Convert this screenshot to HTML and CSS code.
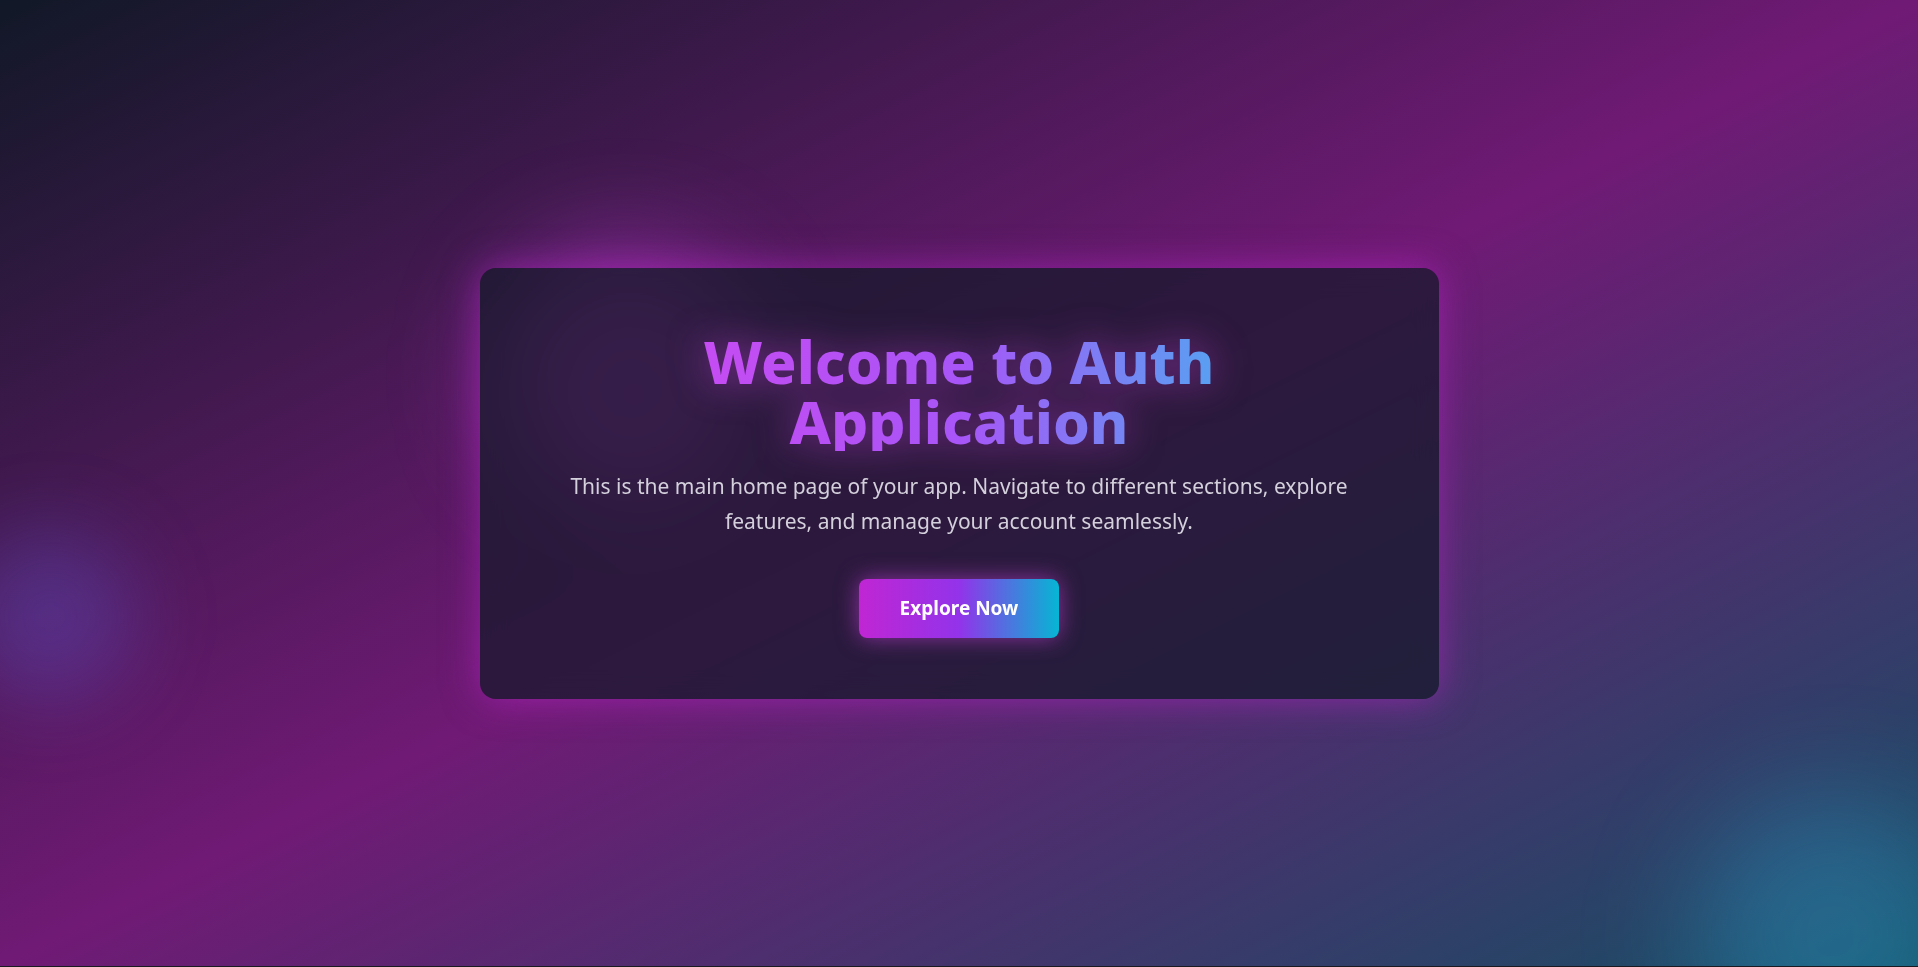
FILE: index.html
```html
<!DOCTYPE html>
<html lang="en">
<head>
<meta charset="utf-8">
<title>Auth Application</title>
<link rel="stylesheet" href="styles.css">
</head>
<body>
<main class="page">
  <div class="blob blob-top"></div>
  <div class="blob blob-left"></div>
  <div class="blob blob-br"></div>
  <section class="card">
    <h1 class="title">Welcome to Auth Application</h1>
    <p class="lead">This is the main home page of your app. Navigate to different sections, explore features, and manage your account seamlessly.</p>
    <button class="cta" type="button">Explore Now</button>
  </section>
</main>
</body>
</html>
```
FILE: styles.css
```css
* { box-sizing: border-box; }
html, body { margin: 0; padding: 0; }
html { background: #1a1a22; }
body {
  font-family: "Noto Sans", "Open Sans", sans-serif;
  background: #1a1a22;
}
.page {
  position: relative;
  height: calc(100vh - 1px);
  overflow: hidden;
  display: flex;
  align-items: center;
  justify-content: center;
  background: linear-gradient(to bottom right, #111827 0%, #701a75 50%, #164e63 100%);
}
.blob {
  position: absolute;
  border-radius: 50%;
  pointer-events: none;
}
.blob-top {
  left: 494px;
  top: 245px;
  width: 260px;
  height: 260px;
  background: rgba(217, 70, 239, 0.42);
  filter: blur(50px);
}
.blob-left {
  left: -35px;
  top: 532px;
  width: 170px;
  height: 170px;
  background: rgba(99, 102, 241, 0.28);
  filter: blur(40px);
}
.blob-br {
  left: 1693px;
  top: 795px;
  width: 280px;
  height: 280px;
  background: rgba(56, 189, 248, 0.26);
  filter: blur(55px);
}
.card {
  position: relative;
  width: 50%;
  padding: 63px 48px 61px;
  border-radius: 16px;
  background: rgba(17, 24, 39, 0.7);
  backdrop-filter: blur(12px);
  box-shadow: 0 0 36px rgba(192, 38, 211, 0.55);
  display: flex;
  flex-direction: column;
  align-items: center;
  text-align: center;
}
.title {
  align-self: stretch;
  margin: 0;
  padding: 0 40px;
  font-size: 58.6px;
  line-height: 60px;
  font-weight: 800;
  background: linear-gradient(to right, #d946ef, #a855f7, #22d3ee);
  -webkit-background-clip: text;
  background-clip: text;
  -webkit-text-fill-color: transparent;
  color: transparent;
  filter: drop-shadow(0 0 18px rgba(217, 70, 239, 0.5));
}
.lead {
  margin: 18px 0 0;
  max-width: 810px;
  font-size: 21px;
  line-height: 35.5px;
  color: #d4d0dc;
}
.cta {
  margin-top: 39px;
  width: 200px;
  height: 59px;
  border: 0;
  border-radius: 8px;
  font-family: "Noto Sans", "Open Sans", sans-serif;
  font-size: 19px;
  font-weight: 700;
  color: #ffffff;
  background: linear-gradient(to right, #c026d3, #9333ea, #06b6d4);
  box-shadow: 0 0 22px rgba(217, 70, 239, 0.55);
  cursor: pointer;
}
```
